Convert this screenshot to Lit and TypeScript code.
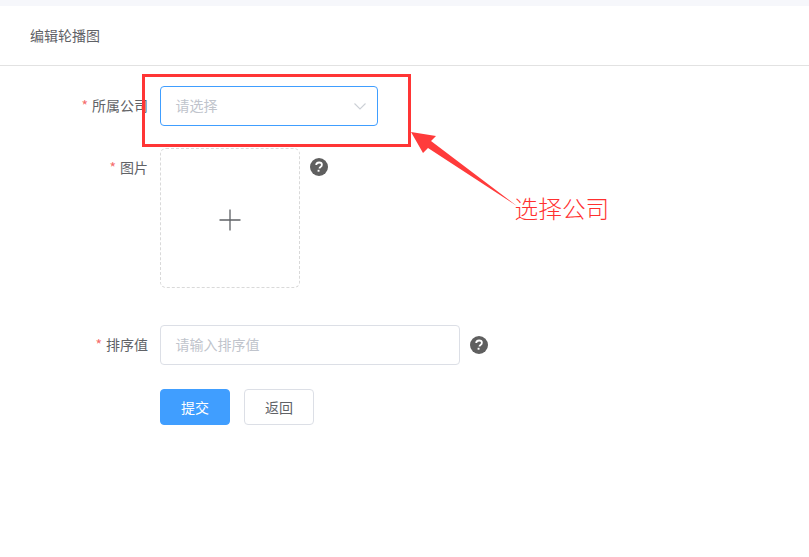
import { LitElement, html, css } from "lit";
import { customElement } from "lit/decorators.js";

const help = () => html`<svg class="help" viewBox="0 0 18 18" width="18" height="18" aria-hidden="true">
  <circle cx="9" cy="9" r="9" fill="#5f5f5f"></circle>
  <path d="M6.2 7.1c0-1.6 1.2-2.6 2.9-2.6s2.8 1 2.8 2.3c0 1.1-.6 1.7-1.4 2.2-.7.5-1 .8-1 1.6" fill="none" stroke="#fff" stroke-width="1.8"></path>
  <rect x="7.6" y="11.8" width="1.9" height="1.9" fill="#fff"></rect>
</svg>`;

@customElement("app-root")
export class AppRoot extends LitElement {
  static styles = css`
    :host {
      display: block;
      position: relative;
      height: 557px;
      overflow: hidden;
      background: #fff;
      font-family: "Noto Sans CJK SC", "Liberation Sans", sans-serif;
      font-size: 14px;
      color: #606266;
    }
    .strip { height: 6px; background: #f6f7fb; }
    .head {
      height: 57px;
      padding: 0 0 2px 30px;
      display: flex;
      align-items: center;
      border-bottom: 1px solid #e2e2e2;
      color: #5f6166;
    }
    .form { display: flex; flex-direction: column; padding-top: 20px; }
    .row { display: flex; align-items: flex-start; }
    .label {
      width: 148px;
      height: 40px;
      line-height: 38px;
      text-align: right;
      margin-right: 12px;
      flex: none;
    }
    .star { color: #f56c6c; margin-right: 4px; }
    .field {
      height: 40px;
      box-sizing: border-box;
      border: 1px solid #dcdfe6;
      border-radius: 4px;
      padding: 0 15px 2px 14.5px;
      display: flex;
      align-items: center;
      color: #c0c4cc;
    }
    .select { width: 218px; border-color: #409eff; justify-content: space-between; padding-right: 11px; }
    .input { width: 300px; }
    .upload {
      width: 140px;
      height: 140px;
      box-sizing: border-box;
      border: 1px dashed #d9d9d9;
      border-radius: 6px;
      display: flex;
      align-items: center;
      justify-content: center;
    }
    .plus { margin-top: 3px; }
    .chevron { margin-top: 2px; }
    .help { flex: none; margin-left: 10px; }
    .r-select { margin-bottom: 22px; }
    .r-image { margin-bottom: 37px; }
    .r-image .help { margin-top: 10px; }
    .r-sort { margin-bottom: 24px; align-items: center; }
    .actions { display: flex; gap: 14px; padding-left: 160px; }
    .btn {
      width: 70px;
      height: 36px;
      box-sizing: border-box;
      border-radius: 4px;
      border: 1px solid #dcdfe6;
      display: flex;
      align-items: center;
      justify-content: center;
      font-size: 14px;
      color: #606266;
    }
    .primary { background: #409eff; border-color: #409eff; color: #fff; }
    .box {
      position: absolute;
      left: 142px;
      top: 74px;
      width: 269px;
      height: 73px;
      box-sizing: border-box;
      border: 3px solid #ff3535;
    }
    .arrow { position: absolute; left: 0; top: 0; pointer-events: none; }
    .note {
      position: absolute;
      left: 514.5px;
      top: 191px;
      font-size: 23.7px;
      line-height: 34px;
      font-weight: 300;
      color: #ff3030;
      white-space: nowrap;
    }
  `;

  render() {
    return html`
      <div class="strip"></div>
      <div class="head">编辑轮播图</div>
      <div class="form">
        <div class="row r-select">
          <div class="label"><span class="star">*</span>所属公司</div>
          <div class="field select">
            <span>请选择</span>
            <svg class="chevron" width="12" height="7" viewBox="0 0 12 7" aria-hidden="true">
              <path d="M0.5 0.5l5.5 5.5 5.5-5.5" fill="none" stroke="#ccd0d6" stroke-width="1.1"></path>
            </svg>
          </div>
        </div>
        <div class="row r-image">
          <div class="label"><span class="star">*</span>图片</div>
          <div class="upload">
            <svg class="plus" width="22" height="22" viewBox="0 0 22 22" aria-hidden="true">
              <path d="M11 0.5v21M0.5 11h21" stroke="#5f6266" stroke-width="1.3" fill="none"></path>
            </svg>
          </div>
          ${help()}
        </div>
        <div class="row r-sort">
          <div class="label"><span class="star">*</span>排序值</div>
          <div class="field input">请输入排序值</div>
          ${help()}
        </div>
        <div class="actions">
          <div class="btn primary">提交</div>
          <div class="btn">返回</div>
        </div>
      </div>
      <div class="box"></div>
      <svg class="arrow" width="809" height="557" viewBox="0 0 809 557" aria-hidden="true">
        <polygon points="411,132 436,136 431,141 517,206 428,148 423,153" fill="#ff3b3b"></polygon>
      </svg>
      <div class="note">选择公司</div>
    `;
  }
}
